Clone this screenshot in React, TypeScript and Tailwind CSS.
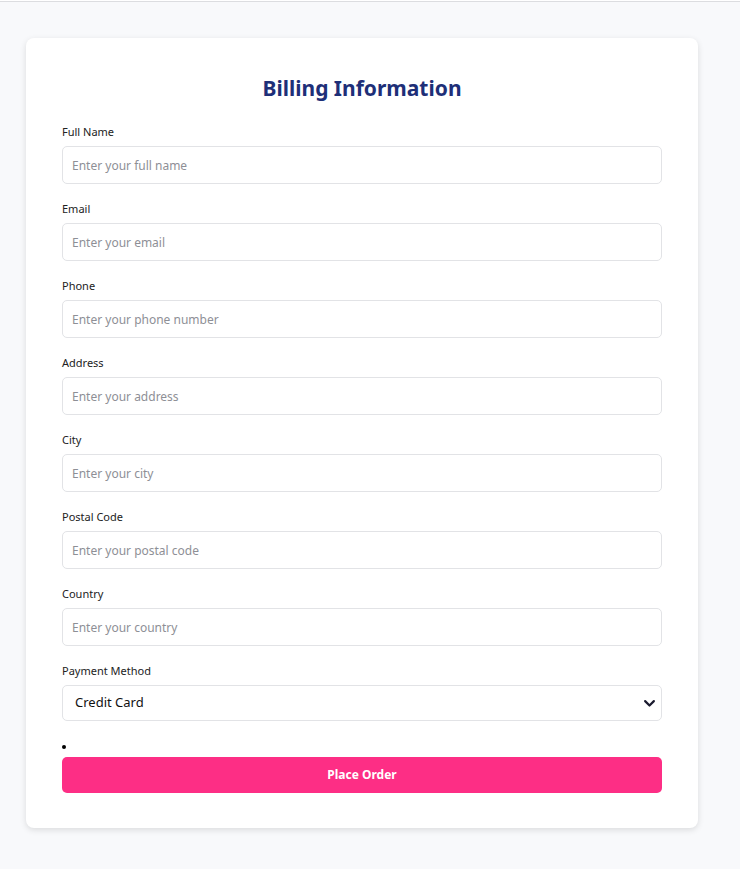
const fields = [
  { label: 'Full Name', placeholder: 'Enter your full name', type: 'text' },
  { label: 'Email', placeholder: 'Enter your email', type: 'email' },
  { label: 'Phone', placeholder: 'Enter your phone number', type: 'tel' },
  { label: 'Address', placeholder: 'Enter your address', type: 'text' },
  { label: 'City', placeholder: 'Enter your city', type: 'text' },
  { label: 'Postal Code', placeholder: 'Enter your postal code', type: 'text' },
  { label: 'Country', placeholder: 'Enter your country', type: 'text' },
];

export default function App() {
  return (
    <div className="min-h-[869px] bg-[#f8f9fb] font-['Noto_Sans',sans-serif]">
      <div className="h-[2px] border-b border-[#dcdde0] bg-white" />
      <div className="pt-9 pb-10 pl-[26px]">
        <div className="w-[672px] bg-white rounded-lg shadow-[0_2px_6px_rgba(0,0,0,0.12)] pl-9 pr-9 pt-[34px] pb-[35px]">
          <h1 className="text-center text-[21px] font-bold text-[#1e2f78] leading-[32px] mb-[20px]">
            Billing Information
          </h1>

          <form className="flex flex-col" onSubmit={(e) => e.preventDefault()}>
            {fields.map((f) => (
              <div key={f.label} className="mb-[17px]">
                <label className="block text-[11px] text-[#222] leading-[16px] mb-[6px]">{f.label}</label>
                <input
                  type={f.type}
                  placeholder={f.placeholder}
                  className="w-full h-[38px] px-[9px] border border-[#e2e3e6] rounded-[5px] text-[12px] text-[#222] placeholder:text-[#8e8f96] outline-none"
                />
              </div>
            ))}

            {/* Payment */}
            <div>
              <label className="block text-[11px] text-[#222] leading-[16px] mb-[6px]">Payment Method</label>
              <div className="relative">
                <select className="w-full h-[36px] appearance-none pl-3 pr-8 border border-[#e2e3e6] rounded-[5px] text-[13px] text-[#111] bg-white outline-none">
                  <option>Credit Card</option>
                  <option>PayPal</option>
                  <option>Bank Transfer</option>
                </select>
                <svg
                  className="absolute right-[5px] top-1/2 -translate-y-1/2 pointer-events-none"
                  width="15"
                  height="15"
                  viewBox="0 0 24 24"
                  fill="none"
                  stroke="#1a1a2e"
                  strokeWidth="3.5"
                  strokeLinecap="round"
                  strokeLinejoin="round"
                >
                  <path d="M5 9l7 7 7-7" />
                </svg>
              </div>
            </div>

            <ul className="list-disc list-inside text-[11px] leading-[10px] mt-[21px] mb-[5px] pl-0">
              <li />
            </ul>

            <button
              type="submit"
              className="w-full h-[36px] rounded-[5px] bg-[#fd2e85] text-white text-[12px] font-bold"
            >
              Place Order
            </button>
          </form>
        </div>
      </div>
    </div>
  );
}
